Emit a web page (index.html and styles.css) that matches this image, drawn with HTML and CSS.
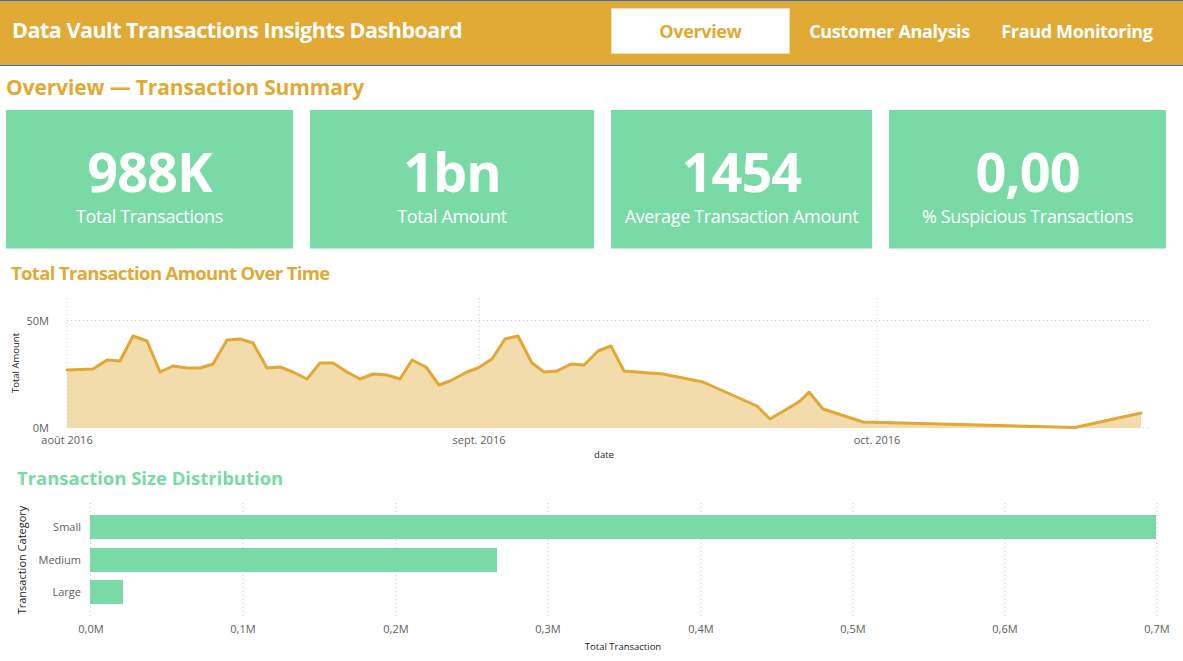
FILE: index.html
```html
<!DOCTYPE html>
<html lang="fr">
<head>
<meta charset="utf-8">
<title>Data Vault Transactions Insights Dashboard</title>
<link rel="stylesheet" href="styles.css">
</head>
<body>
<header class="topbar">
  <h1 class="brand">Data Vault Transactions Insights Dashboard</h1>
  <nav class="tabs">
    <a class="tab active">Overview</a>
    <a class="tab wide">Customer Analysis</a>
    <a class="tab last">Fraud Monitoring</a>
  </nav>
</header>
<main class="page">
  <h2 class="page-title">Overview — Transaction Summary</h2>
  <section class="kpis">
    <div class="kpi"><div class="kpi-value">988K</div><div class="kpi-label">Total Transactions</div></div>
    <div class="kpi"><div class="kpi-value">1bn</div><div class="kpi-label">Total Amount</div></div>
    <div class="kpi"><div class="kpi-value">1454</div><div class="kpi-label">Average Transaction Amount</div></div>
    <div class="kpi"><div class="kpi-value">0,00</div><div class="kpi-label">% Suspicious Transactions</div></div>
  </section>

  <section class="chart">
    <h3 class="chart-title gold">Total Transaction Amount Over Time</h3>
    <svg class="line-svg" width="1183" height="177" viewBox="0 285 1183 177">
      <g class="grid">
        <line x1="67" y1="298" x2="67" y2="427"/>
        <line x1="479" y1="298" x2="479" y2="427"/>
        <line x1="877" y1="298" x2="877" y2="427"/>
        <line x1="67" y1="320.5" x2="1148" y2="320.5"/>
        <line x1="67" y1="427.5" x2="1148" y2="427.5"/>
      </g>
      <polygon class="area" points="67,370 93,369 107,360 120,361 133,336 147,341 160,372 173,366 187,368 200,368 213,364 227,340 240,339 253,343 267,368 280,367 293,372 307,379 320,363 333,363 347,372 360,379 373,374 387,375 400,379 412,360 426,367 439,385 450,381 467,372 478,368 492,359 505,339 518,336 532,363 544,372 557,371 571,364 584,365 598,351 611,346 624,371 663,374 703,382 757,406 770,419 797,403 800,401 809,392 823,409 863,422 1075,427.5 1141,413 1141,428 67,428"/>
      <polyline class="line" points="67,370 93,369 107,360 120,361 133,336 147,341 160,372 173,366 187,368 200,368 213,364 227,340 240,339 253,343 267,368 280,367 293,372 307,379 320,363 333,363 347,372 360,379 373,374 387,375 400,379 412,360 426,367 439,385 450,381 467,372 478,368 492,359 505,339 518,336 532,363 544,372 557,371 571,364 584,365 598,351 611,346 624,371 663,374 703,382 757,406 770,419 797,403 800,401 809,392 823,409 863,422 1075,427.5 1141,413"/>
      <g class="tick">
        <text x="49" y="324.5" text-anchor="end">50M</text>
        <text x="49" y="431.5" text-anchor="end">0M</text>
        <text x="67" y="443.5" text-anchor="middle">août 2016</text>
        <text x="479" y="443.5" text-anchor="middle">sept. 2016</text>
        <text x="877" y="443.5" text-anchor="middle">oct. 2016</text>
      </g>
      <text class="axis-title" x="604" y="458" text-anchor="middle">date</text>
      <text class="axis-title" transform="translate(19 363) rotate(-90)" text-anchor="middle">Total Amount</text>
    </svg>
  </section>

  <section class="chart">
    <h3 class="chart-title green">Transaction Size Distribution</h3>
    <svg class="bar-svg" width="1183" height="171" viewBox="0 490 1183 171">
      <g class="grid">
        <line x1="90.5" y1="503" x2="90.5" y2="617"/>
        <line x1="243" y1="503" x2="243" y2="617"/>
        <line x1="396" y1="503" x2="396" y2="617"/>
        <line x1="548" y1="503" x2="548" y2="617"/>
        <line x1="701" y1="503" x2="701" y2="617"/>
        <line x1="853" y1="503" x2="853" y2="617"/>
        <line x1="1005" y1="503" x2="1005" y2="617"/>
        <line x1="1157" y1="503" x2="1157" y2="617"/>
      </g>
      <rect class="bar" x="90" y="515" width="1066" height="24"/>
      <rect class="bar" x="90" y="548" width="407" height="24"/>
      <rect class="bar" x="90" y="580" width="33" height="24"/>
      <g class="tick">
        <text x="81" y="531" text-anchor="end">Small</text>
        <text x="81" y="564" text-anchor="end">Medium</text>
        <text x="81" y="596" text-anchor="end">Large</text>
        <text x="91" y="633" text-anchor="middle">0,0M</text>
        <text x="243" y="633" text-anchor="middle">0,1M</text>
        <text x="396" y="633" text-anchor="middle">0,2M</text>
        <text x="548" y="633" text-anchor="middle">0,3M</text>
        <text x="701" y="633" text-anchor="middle">0,4M</text>
        <text x="853" y="633" text-anchor="middle">0,5M</text>
        <text x="1005" y="633" text-anchor="middle">0,6M</text>
        <text x="1157" y="633" text-anchor="middle">0,7M</text>
      </g>
      <text class="axis-title" x="623" y="650" text-anchor="middle">Total Transaction</text>
      <text class="axis-title lg" transform="translate(26 560) rotate(-90)" text-anchor="middle">Transaction Category</text>
    </svg>
  </section>
</main>
</body>
</html>
```

FILE: styles.css
```css
* { box-sizing: border-box; }

html, body {
  margin: 0;
  padding: 0;
  background: #ffffff;
}

body {
  width: 1183px;
  height: 661px;
  overflow: hidden;
  font-family: "Open Sans", "Noto Sans", "DejaVu Sans", sans-serif;
}

.topbar {
  display: flex;
  height: 66px;
  background: #E0AA35;
  border-top: 1px solid #3A6EAD;
  border-bottom: 1px solid #3A6EAD;
}

.brand {
  margin: 15px 0 0 12px;
  align-self: flex-start;
  font-size: 21.5px;
  line-height: 28px;
  font-weight: 700;
  color: #ffffff;
  letter-spacing: -0.48px;
  white-space: nowrap;
}

.tabs {
  display: flex;
  margin-left: auto;
  margin-right: 18px;
  padding-top: 7px;
}

.tab {
  width: 179px;
  height: 46px;
  display: flex;
  align-items: center;
  justify-content: center;
  font-size: 18px;
  line-height: 24px;
  font-weight: 700;
  color: #ffffff;
  letter-spacing: -0.35px;
  white-space: nowrap;
}

.tab.wide { width: 199px; }
.tab.last { width: 176px; }

.tab.active {
  background: #ffffff;
  color: #E0AA35;
  border: 1px solid #F1DDB0;
}

.page-title {
  margin: 7px 0 9px 6px;
  font-size: 21px;
  line-height: 28px;
  font-weight: 700;
  color: #E0AA35;
  letter-spacing: -0.13px;
}

.kpis {
  display: grid;
  grid-template-columns: 287px 284px 261px 277px;
  column-gap: 17px;
  padding-left: 6px;
}

.kpi {
  height: 139px;
  background: #79DAA6;
  border-bottom: 1px solid #B9EDD1;
  display: flex;
  flex-direction: column;
  align-items: center;
  padding-top: 33px;
  color: #ffffff;
}

.kpi-value {
  font-size: 54px;
  line-height: 56px;
  font-weight: 700;
  letter-spacing: -1px;
}

.kpi-label {
  margin-top: 5px;
  font-size: 18px;
  line-height: 24px;
  font-weight: 400;
  letter-spacing: -0.35px;
  white-space: nowrap;
}

.chart-title {
  margin: 12px 0 0 11px;
  font-size: 18.5px;
  line-height: 24px;
  font-weight: 700;
  letter-spacing: -0.65px;
}

.chart + .chart .chart-title {
  margin: 4px 0 0 17px;
  letter-spacing: -0.02px;
}

.chart-title.gold { color: #E0AA35; }
.chart-title.green { color: #79DAA6; }

svg { display: block; }

.grid line {
  stroke: #C8C8C8;
  stroke-width: 1;
  stroke-dasharray: 1 3;
}

.area {
  fill: #F3DCAB;
  stroke: none;
}

.line {
  fill: none;
  stroke: #E2A734;
  stroke-width: 3;
  stroke-linejoin: round;
  stroke-linecap: round;
}

.bar { fill: #79DAA6; }

.tick text {
  font-family: "Open Sans", "Noto Sans", sans-serif;
  font-size: 11px;
  fill: #605E5C;
}

.axis-title {
  font-family: "Open Sans", "Noto Sans", sans-serif;
  font-size: 9.5px;
  fill: #252423;
}

.axis-title.lg {
  font-size: 11px;
}
```
